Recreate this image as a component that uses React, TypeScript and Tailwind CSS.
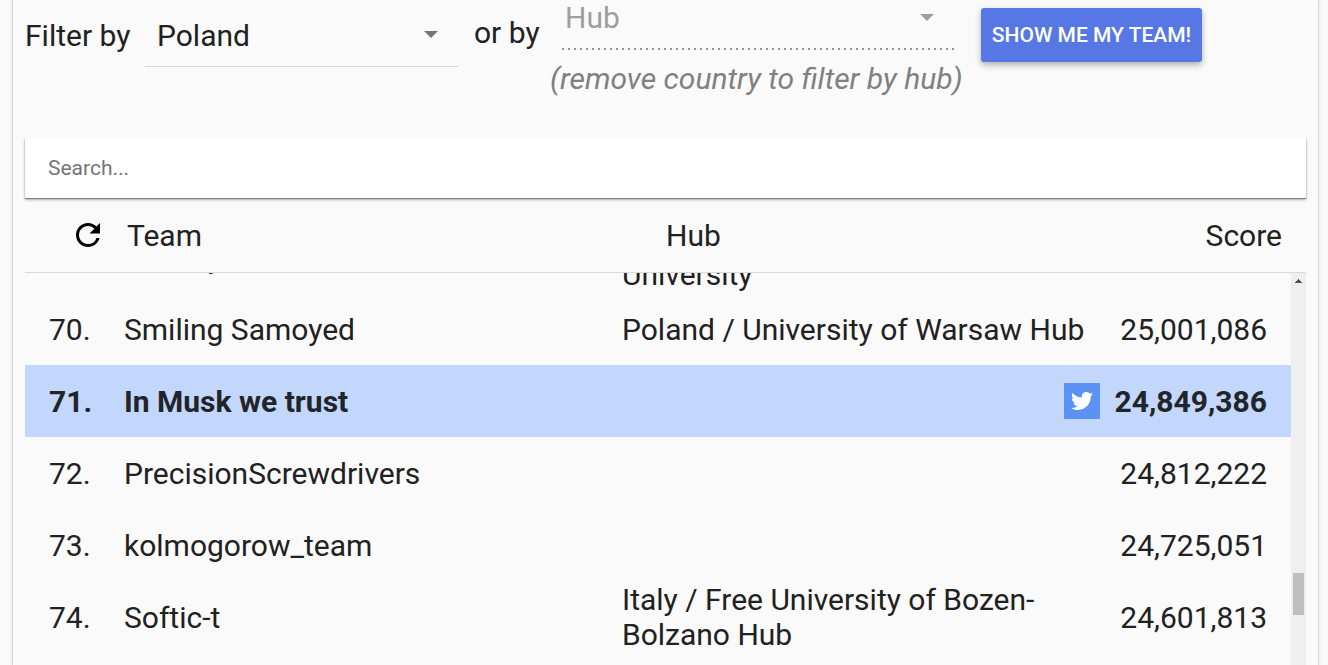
import React from "react";
import { FaTwitter } from "react-icons/fa";
import { MdRefresh } from "react-icons/md";

type Row = { rank: number; team: string; hub?: string; score: string; mine?: boolean };

const rows: Row[] = [
  { rank: 69, team: "Gravely", hub: "Poland / Adam Mickiewicz Poznan University", score: "25,018,402" },
  { rank: 70, team: "Smiling Samoyed", hub: "Poland / University of Warsaw Hub", score: "25,001,086" },
  { rank: 71, team: "In Musk we trust", score: "24,849,386", mine: true },
  { rank: 72, team: "PrecisionScrewdrivers", score: "24,812,222" },
  { rank: 73, team: "kolmogorow_team", score: "24,725,051" },
  { rank: 74, team: "Softic-t", hub: "Italy / Free University of Bozen-Bolzano Hub", score: "24,601,813" },
];

function Caret({ className }: { className: string }) {
  return (
    <svg viewBox="0 0 14 7" aria-hidden="true" className={`pointer-events-none absolute h-[7px] w-3.5 fill-current ${className}`}>
      <path d="M0 0h14L7 7z" />
    </svg>
  );
}

function Filters() {
  return (
    <div className="flex h-[138px] shrink-0 items-start">
      <label htmlFor="country" className="w-[120px] pt-[18px]">Filter by</label>
      <div className="relative w-[313px]">
        <select id="country" defaultValue="Poland" className="h-[67px] w-full appearance-none border-b border-[#d6d6d6] bg-transparent pt-1 pr-12 pl-3 outline-none">
          <option>Poland</option>
          <option>Italy</option>
        </select>
        <Caret className="top-[31px] right-5 text-[#757575]" />
      </div>
      <label htmlFor="hub" className="w-[92px] pt-[15px] pl-4 whitespace-nowrap">or by</label>
      <div className="w-[416px]">
        <div className="relative mr-3 ml-3">
          <select id="hub" disabled className="h-[46px] w-full appearance-none bg-transparent pr-12 pb-3 pl-[3px] text-[#9e9e9e] opacity-100">
            <option>Hub</option>
          </select>
          <Caret className="top-3.5 right-5 text-[#9e9e9e]" />
          <svg aria-hidden="true" className="block h-[5px] w-full text-[#949494]">
            <line x1="0" x2="100%" y1="3" y2="3" stroke="currentColor" strokeWidth="2" strokeDasharray="2 4" />
          </svg>
        </div>
        <p className="pt-2.5 whitespace-nowrap text-[#808080] italic">(remove country to filter by hub)</p>
      </div>
      <button className="mt-2 ml-[15px] h-[54px] w-[221px] rounded-[3px] bg-[#5677e4] text-[21px] font-medium whitespace-nowrap text-white shadow-[0_3px_6px_rgba(0,0,0,0.3)]">
        SHOW ME MY TEAM!
      </button>
    </div>
  );
}

function Scrollbar() {
  return (
    <div aria-hidden="true" className="pointer-events-none absolute top-[75px] right-0 bottom-0 w-[15px] bg-[#efefef]">
      <svg viewBox="0 0 7 4" className="mx-auto mt-1.5 h-1 w-[7px] fill-[#505050]">
        <path d="M3 0h1v1h1v1h1v1h1v1H0V3h1V2h1V1h1z" />
      </svg>
      <div className="mx-0.5 mt-[290px] h-[42px] bg-[#bfbfbf]" />
    </div>
  );
}

function Leaderboard() {
  return (
    <div className="relative min-h-0 flex-1 overflow-hidden">
      <table className="flex h-full w-full flex-col">
        <thead className="block shrink-0 border-b border-[#d9d9d9]">
          <tr className="flex h-[74px] items-center text-left">
            <th className="w-[102px] pl-[45px] font-normal">
              <button aria-label="Refresh" className="block text-black">
                <MdRefresh size={36} />
              </button>
            </th>
            <th className="w-[539px] font-normal">Team</th>
            <th className="flex-1 font-normal">Hub</th>
            <th className="pr-6 font-normal">Score</th>
          </tr>
        </thead>
        <tbody className="relative block min-h-0 flex-1 overflow-hidden pr-[15px]">
          {rows.map((r) => (
            <tr
              key={r.rank}
              className={`flex h-[72px] items-center pl-6 first:-mt-[52px] ${r.mine ? "bg-[#c2d7fb] font-bold text-[#212529]" : ""}`}
            >
              <td className="w-[75px]">{r.rank}.</td>
              <td className="w-[498px]">{r.team}</td>
              <td className="min-w-0 flex-1">{r.hub}</td>
              <td className="flex items-center justify-end pr-6">
                {r.mine && (
                  <a href="#share" aria-label="Share on Twitter" className="mr-[15px] flex size-9 items-center justify-center bg-[#5c92f4] text-white">
                    <FaTwitter size={22} />
                  </a>
                )}
                {r.score}
              </td>
            </tr>
          ))}
        </tbody>
      </table>
      <Scrollbar />
    </div>
  );
}

export default function App() {
  return (
    <div className="h-screen overflow-hidden bg-[#fafafa] pr-[9px] pl-3 font-['Roboto',sans-serif] text-[30px] leading-[35px] text-[#212121]">
      <main className="flex h-full flex-col border-x border-[#d6d6d6] px-3 shadow-[0_0_3px_rgba(0,0,0,0.12)]">
        <Filters />
        <input
          type="search"
          aria-label="Search"
          placeholder="Search..."
          className="h-[60px] w-full shrink-0 bg-white px-[23px] text-[21px] shadow-[0_1px_1px_#808080,0_2px_3px_rgba(0,0,0,0.25)] outline-none placeholder:text-[#757575]"
        />
        <Leaderboard />
      </main>
    </div>
  );
}
